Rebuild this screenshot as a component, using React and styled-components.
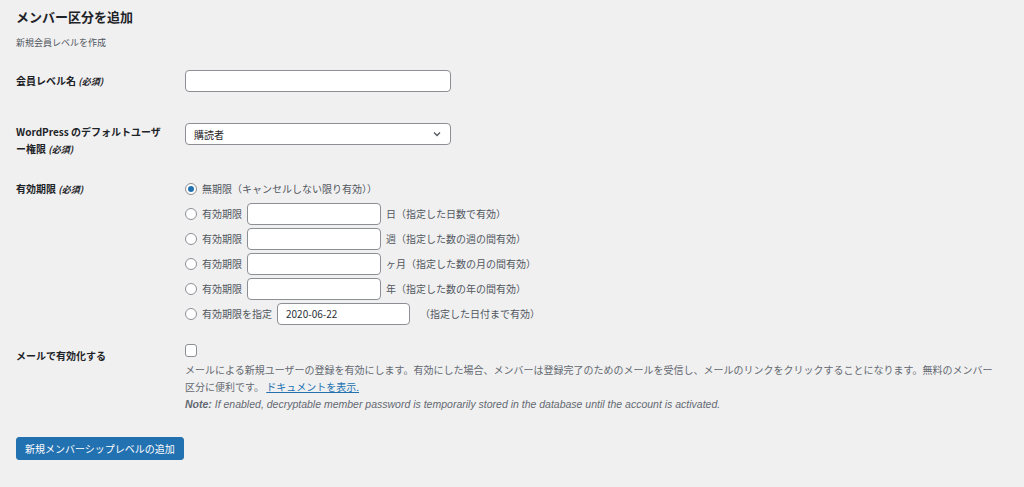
import styled, { createGlobalStyle } from 'styled-components';

const Global = createGlobalStyle`
body{margin:0;background:#f0f0f1;font-family:"Noto Sans CJK JP","Noto Sans",sans-serif;color:#1d2327;}
`;

const Page = styled.div`
padding: 6px 16px 20px 16px;
font-size: 10px;
`;

const Title = styled.h1`
margin: 0;
font-size: 13px;
font-weight: 700;
line-height: 22px;
`;

const Sub = styled.p`
margin: 8px 0 0 0;
font-size: 9px;
color: #50575e;
line-height: 14px;
`;

const Row = styled.div`
display: flex;
margin-top: ${p => p.top}px;
`;

const Label = styled.div`
width: 169px;
flex-shrink: 0;
font-weight: 700;
font-size: 10px;
line-height: 17px;
padding-top: ${p => p.pt || 0}px;
em{font-weight:700;font-size:9px;}
`;

const Field = styled.div`
display: flex;
flex-direction: column;
`;

const TextInput = styled.input`
box-sizing: border-box;
width: ${p => p.w}px;
height: 22px;
border: 1px solid #8c8f94;
border-radius: 4px;
background: #fff;
font-family: inherit;
font-size: 10px;
padding: 0 8px;
color: #2c3338;
`;

const Select = styled.div`
box-sizing: border-box;
width: 266px;
height: 22px;
border: 1px solid #8c8f94;
border-radius: 4px;
background: #fff;
display: flex;
align-items: center;
justify-content: space-between;
padding: 0 8px;
font-size: 10px;
`;

const RadioRow = styled.label`
display: flex;
align-items: center;
gap: 5px;
height: 25px;
color: #50575e;
font-size: 10px;
`;

const Radio = styled.span`
box-sizing: border-box;
width: 12px;
height: 12px;
border-radius: 50%;
border: 1px solid #8c8f94;
background: #fff;
display: flex;
align-items: center;
justify-content: center;
&::after{
  content: '';
  width: 6px;
  height: 6px;
  border-radius: 50%;
  background: ${p => p.on ? '#2271b1' : 'transparent'};
}
`;

const Check = styled.span`
display: block;
box-sizing: border-box;
width: 12px;
height: 13px;
border: 1px solid #8c8f94;
border-radius: 3px;
background: #fff;
margin-top: 1px;
`;

const Desc = styled.p`
margin: 4px 0 0 0;
max-width: 812px;
color: #646970;
font-size: 10px;
line-height: 17px;
a{color:#2271b1;text-decoration:underline;}
`;

const Note = styled.p`
margin: 2px 0 0 0;
color: #646970;
font-size: 10.5px;
line-height: 14px;
font-style: italic;
font-family: "Liberation Sans", sans-serif;
b{font-weight:700;}
`;

const Button = styled.button`
margin-top: 26px;
background: #2271b1;
border: 1px solid #2271b1;
border-radius: 3px;
color: #fff;
font-family: inherit;
font-size: 10px;
height: 23px;
padding: 0 8px;
`;

const periods = [
  '日（指定した日数で有効）',
  '週（指定した数の週の間有効）',
  'ヶ月（指定した数の月の間有効）',
  '年（指定した数の年の間有効）',
];

export default function App(){
  return(
  <Page>
    <Global/>
    <Title>メンバー区分を追加</Title>
    <Sub>新規会員レベルを作成</Sub>
    <Row top={20}>
      <Label pt={2}>会員レベル名 <em>(必須)</em></Label>
      <TextInput w={266}/>
    </Row>
    <Row top={31}>
      <Label>WordPress のデフォルトユーザ<br/>ー権限 <em>(必須)</em></Label>
      <Select>購読者
        <svg width="10" height="10" viewBox="0 0 10 10"><path d="M2 3.5l3 3 3-3" fill="none" stroke="#50575e" strokeWidth="1.3"/></svg>
      </Select>
    </Row>
    <Row top={18}>
      <Label pt={4}>有効期限 <em>(必須)</em></Label>
      <Field>
        <RadioRow><Radio on/>無期限（キャンセルしない限り有効））</RadioRow>
        {periods.map((p,i)=>(
          <RadioRow key={i}><Radio/>有効期限 <TextInput w={134}/> {p}</RadioRow>
        ))}
        <RadioRow><Radio/>有効期限を指定 <TextInput w={133} defaultValue="2020-06-22"/> 　（指定した日付まで有効）</RadioRow>
      </Field>
    </Row>
    <Row top={17}>
      <Label pt={4}>メールで有効化する</Label>
      <Field>
        <Check/>
        <Desc>メールによる新規ユーザーの登録を有効にします。有効にした場合、メンバーは登録完了のためのメールを受信し、メールのリンクをクリックすることになります。無料のメンバー区分に便利です。 <a>ドキュメントを表示.</a></Desc>
        <Note><b>Note:</b> If enabled, decryptable member password is temporarily stored in the database until the account is activated.</Note>
      </Field>
    </Row>
    <Button>新規メンバーシップレベルの追加</Button>
  </Page>
  )
}
